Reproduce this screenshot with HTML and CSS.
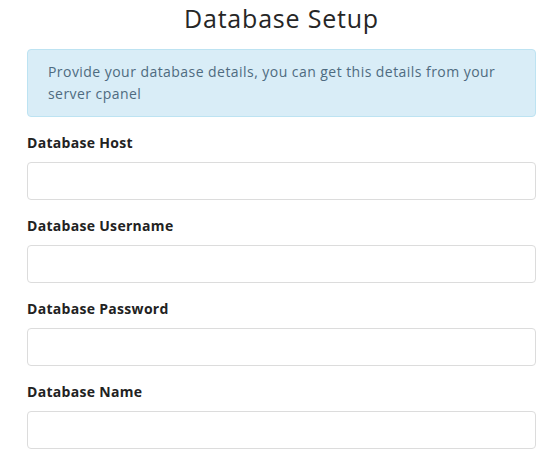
FILE: index.html
```html
<!DOCTYPE html>
<html>
<head>
<meta charset="utf-8">
<link rel="stylesheet" href="styles.css">
</head>
<body>
<div class="wrap">
  <h1 class="title">Database Setup</h1>
  <div class="alert">Provide your database details, you can get this details from your server cpanel</div>
  <form class="form">
    <div class="group">
      <label class="label">Database Host</label>
      <input class="input" type="text">
    </div>
    <div class="group">
      <label class="label">Database Username</label>
      <input class="input" type="text">
    </div>
    <div class="group">
      <label class="label">Database Password</label>
      <input class="input" type="password">
    </div>
    <div class="group">
      <label class="label">Database Name</label>
      <input class="input" type="text">
    </div>
  </form>
</div>
</body>
</html>
```
FILE: styles.css
```css
html, body {
  margin: 0;
  padding: 0;
  background: #ffffff;
}
body {
  font-family: "Open Sans", "Noto Sans", sans-serif;
  color: #333333;
}
.wrap {
  padding: 0 20px 0 27px;
}
.title {
  margin: 0;
  padding-top: 3px;
  height: 46px;
  font-size: 25px;
  line-height: 30px;
  font-weight: 400;
  letter-spacing: 0.8px;
  text-align: center;
  color: #262626;
}
.alert {
  background: #d9edf7;
  border: 1px solid #bde3f2;
  border-radius: 4px;
  color: #4e6b80;
  font-size: 14px;
  line-height: 22px;
  letter-spacing: 0.45px;
  padding: 11px 20px 11px;
}
.form {
  display: flex;
  flex-direction: column;
  gap: 16px;
  margin-top: 16px;
}
.group {
  display: flex;
  flex-direction: column;
  gap: 9px;
}
.label {
  font-size: 14px;
  line-height: 20px;
  font-weight: 700;
  letter-spacing: 0.3px;
  color: #222222;
}
.input {
  box-sizing: border-box;
  height: 38px;
  width: 100%;
  margin: 0;
  border: 1px solid #dcdcdc;
  border-radius: 4px;
  background: #fff;
  font-size: 14px;
  padding: 6px 12px;
}
```
